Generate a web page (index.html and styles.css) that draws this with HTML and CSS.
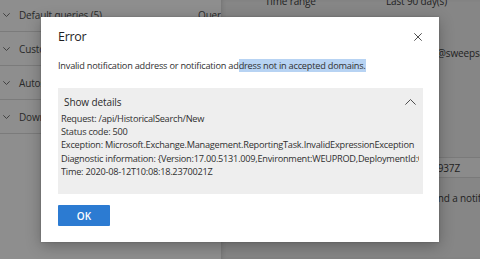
FILE: index.html
```html
<!DOCTYPE html>
<html lang="en">
<head>
<meta charset="utf-8">
<title>Error</title>
<link rel="stylesheet" href="styles.css">
</head>
<body>
<div class="page">
  <aside class="nav">
    <div class="nav-row nav-row-first">
      <svg class="chev" width="7" height="4" viewBox="0 0 7 4"><polyline points="0.3,0.3 3.5,3.5 6.7,0.3" fill="none" stroke="#3a3a3a" stroke-width="0.9"/></svg>
      <span class="nav-name">Default queries (5)</span>
      <span class="nav-col">Queries</span>
    </div>
    <div class="nav-row">
      <svg class="chev" width="7" height="4" viewBox="0 0 7 4"><polyline points="0.3,0.3 3.5,3.5 6.7,0.3" fill="none" stroke="#3a3a3a" stroke-width="0.9"/></svg>
      <span class="nav-name">Custom queries</span>
    </div>
    <div class="nav-row">
      <svg class="chev" width="7" height="4" viewBox="0 0 7 4"><polyline points="0.3,0.3 3.5,3.5 6.7,0.3" fill="none" stroke="#3a3a3a" stroke-width="0.9"/></svg>
      <span class="nav-name">Autosaved queries</span>
    </div>
    <div class="nav-row">
      <svg class="chev" width="7" height="4" viewBox="0 0 7 4"><polyline points="0.3,0.3 3.5,3.5 6.7,0.3" fill="none" stroke="#3a3a3a" stroke-width="0.9"/></svg>
      <span class="nav-name">Downloadable reports</span>
    </div>
  </aside>
  <main class="pane">
    <div class="field field-top"><span class="f-label">Time range</span><span class="f-value">Last 90 day(s)</span></div>
    <div class="field field-mail"><span class="f-label">Email</span><span class="mail-local">reports</span><span class="f-value">@sweepsale.com</span></div>
    <div class="input-row"><span class="f-value">2020-08-12T10:08:17.8659937Z</span></div>
    <div class="field field-notify"><span class="f-value">Send a notification</span></div>
  </main>
</div>
<div class="overlay">
  <div class="dialog" role="dialog" aria-labelledby="dlg-title">
    <div class="dlg-head">
      <h1 class="dlg-title" id="dlg-title">Error</h1>
      <button class="close" aria-label="Close">
        <svg width="8" height="8" viewBox="0 0 8 8"><path d="M0.3 0.3 L7.7 7.7 M7.7 0.3 L0.3 7.7" stroke="#3b3b3b" stroke-width="0.9" fill="none"/></svg>
      </button>
    </div>
    <p class="msg">Invalid notification address or notification ad<span class="sel">dress not in accepted domains.</span></p>
    <div class="details">
      <div class="det-head">
        <span>Show details</span>
        <svg width="11" height="6" viewBox="0 0 11 6"><polyline points="0.4,5.6 5.5,0.5 10.6,5.6" fill="none" stroke="#3b3b3b" stroke-width="0.9"/></svg>
      </div>
      <div class="det-body">
        <div>Request: /api/HistoricalSearch/New</div>
        <div>Status code: 500</div>
        <div>Exception: Microsoft.Exchange.Management.ReportingTask.InvalidExpressionException</div>
        <div>Diagnostic information: {Version:17.00.5131.009,Environment:WEUPROD,DeploymentId:C</div>
        <div>Time: 2020-08-12T10:08:18.2370021Z</div>
      </div>
    </div>
    <div class="actions"><button class="ok">OK</button></div>
  </div>
</div>
</body>
</html>
```
FILE: styles.css
```css
* { box-sizing: border-box; margin: 0; padding: 0; }
html, body { width: 480px; height: 259px; overflow: hidden; }
body {
  font-family: "Open Sans", "Noto Sans", sans-serif;
  background: #858585;
  position: relative;
  color: #2b2b2b;
}

.page { display: flex; height: 259px; }

.nav { width: 221px; background: #8e8e8e; overflow: hidden; flex: none; }
.nav-row {
  height: 34px;
  border-bottom: 1px solid #7b7b7b;
  display: flex;
  align-items: center;
  padding-left: 3px;
  font-size: 10px;
  letter-spacing: -0.15px;
  color: #2a2a2a;
  white-space: nowrap;
}
.nav-row-first { margin-top: -2px; }
.chev { flex: none; margin-right: 9px; }
.nav-name { width: 179px; flex: none; }
.nav-col { flex: none; }

.pane {
  flex: 1;
  background: #868686;
  padding-left: 44px;
  display: flex;
  flex-direction: column;
  font-size: 10px;
  letter-spacing: -0.15px;
  color: #222222;
  white-space: nowrap;
  overflow: hidden;
  box-shadow: inset 3px 0 4px -2px rgba(0,0,0,0.15);
}
.field { display: flex; height: 14px; align-items: center; }
.f-label { width: 121px; flex: none; }
.field-top { margin-top: -6px; }
.field-mail { margin-top: 38px; }
.mail-local { width: 51px; flex: none; text-align: right; overflow: hidden; }
.input-row {
  margin-top: 97px;
  margin-left: 80px;
  height: 21px;
  border-top: 1px solid #7a7a7a;
  border-bottom: 1px solid #7a7a7a;
  background: #8b8b8b;
  display: flex;
  align-items: center;
  justify-content: flex-end;
  padding-right: 20px;
  overflow: hidden;
}
.field-notify {
  margin-top: 13px;
  margin-left: 162px;
  height: 14px;
}

.overlay { position: absolute; inset: 0; }
.dialog {
  position: absolute;
  left: 41px;
  top: 17px;
  width: 398px;
  height: 225px;
  background: #ffffff;
  box-shadow: 0 4px 14px rgba(0,0,0,0.28), 0 0 2px rgba(0,0,0,0.2);
  padding: 11px 16px 16px 17px;
  display: flex;
  flex-direction: column;
}
.dlg-head { display: flex; justify-content: space-between; align-items: center; height: 18px; }
.dlg-title { font-size: 12.5px; letter-spacing: -0.3px; font-weight: 400; color: #1f1f1f; line-height: 18px; }
.close { border: none; background: none; width: 9px; height: 8px; display: flex; align-items: center; justify-content: flex-start; }
.close svg { display: block; }

.msg {
  margin-top: 12.5px;
  font-size: 9.2px;
  letter-spacing: -0.22px;
  line-height: 13px;
  color: #303030;
  white-space: nowrap;
}
.sel { background: #b7d3f3; }

.details {
  margin-top: 16.5px;
  height: 106px;
  background: #eeeeee;
  padding-top: 7px;
  flex: none;
}
.det-head {
  height: 14px;
  display: flex;
  justify-content: space-between;
  align-items: center;
  padding: 0 7px 0 6px;
  font-size: 10px;
  letter-spacing: -0.1px;
  color: #2b2b2b;
}
.det-body {
  margin-top: 2.6px;
  margin-left: 3px;
  margin-right: 4px;
  overflow: hidden;
  white-space: nowrap;
  font-size: 9.2px;
  letter-spacing: -0.24px;
  line-height: 13.35px;
  color: #303030;
}

.actions { margin-top: 11px; display: flex; }
.ok {
  width: 52px;
  height: 21px;
  border: none;
  border-radius: 1px;
  background: #2c7bd2;
  color: #ffffff;
  font-family: "Open Sans", "Noto Sans", sans-serif;
  font-size: 10px;
  font-weight: 600;
}
```
